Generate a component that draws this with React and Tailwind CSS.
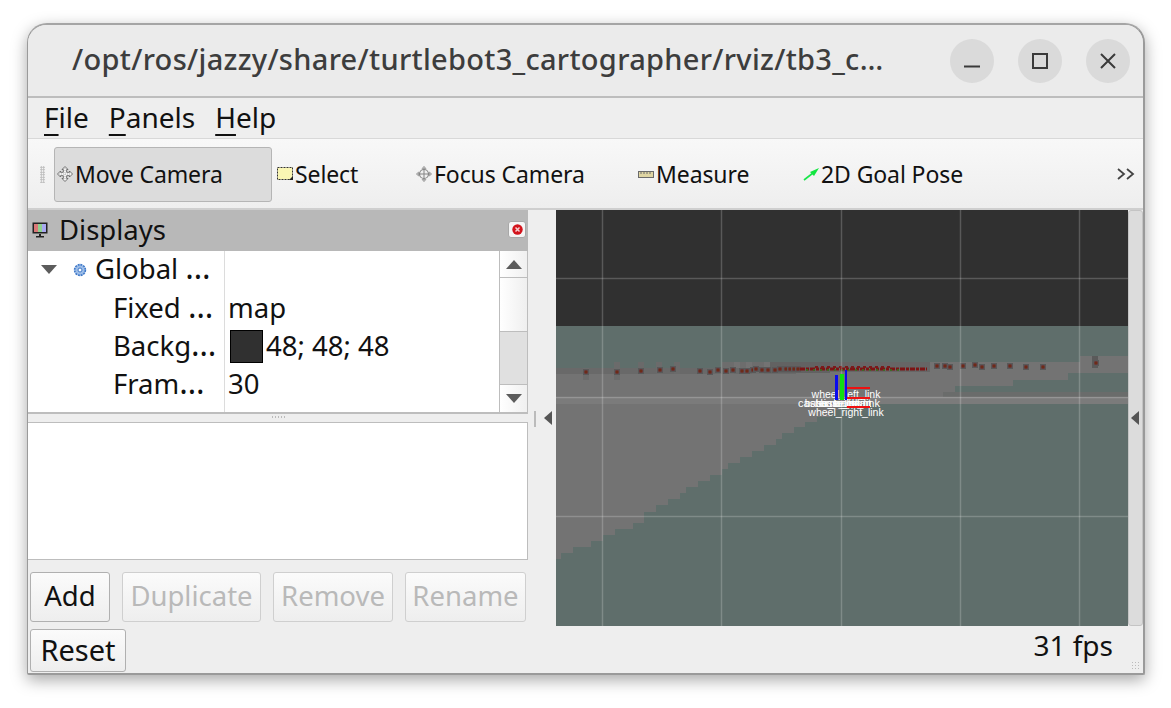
import React from "react";

const FONT = { fontFamily: '"Noto Sans", "Open Sans", sans-serif' };

const Move = () => (
  <svg width="16" height="16" viewBox="0 0 16 16" className="shrink-0">
    <path d="M8 .5 11 3.5H9.7V6.3H12.5V5L15.5 8 12.5 11V9.7H9.7V12.5H11L8 15.5 5 12.5H6.3V9.7H3.5V11L.5 8 3.5 5V6.3H6.3V3.5H5Z" fill="#f4f4f4" stroke="#6e6e6e" strokeWidth="1" />
    <path d="M2 8H14M8 2V14" stroke="#b5b5b5" strokeWidth="1" strokeDasharray="1 1" />
  </svg>
);
const SelectIcon = () => (
  <svg width="16" height="14" viewBox="0 0 16 14" className="shrink-0">
    <rect x=".5" y=".5" width="15" height="12" fill="#faf6b4" stroke="#333" strokeDasharray="2 1" />
    <path d="M12 13h4V9z" fill="#222" />
  </svg>
);
const Focus = () => (
  <svg width="16" height="16" viewBox="0 0 16 16" className="shrink-0">
    <path d="M8 .3 10 2.6H6ZM8 15.7 10 13.4H6ZM.3 8 2.6 6V10ZM15.7 8 13.4 6V10Z" fill="#bdbdbd" stroke="#8a8a8a" strokeWidth=".6" />
    <circle cx="8" cy="8" r="4.5" fill="#efefef" stroke="#858585" strokeWidth="1.2" />
    <path d="M8 2.5V13.5M2.5 8H13.5" stroke="#858585" strokeWidth="1" />
  </svg>
);
const Ruler = () => (
  <svg width="16" height="7" viewBox="0 0 16 7" className="shrink-0">
    <rect x=".5" y=".5" width="15" height="6" fill="#dfd5a3" stroke="#6a6a6a" />
    <path d="M3 1v2M6 1v2M9 1v2M12 1v2" stroke="#6a6a6a" />
  </svg>
);
const Goal = () => (
  <svg width="16" height="14" viewBox="0 0 16 14" className="shrink-0">
    <path d="M1 13 10 6" stroke="#19e64a" strokeWidth="1.6" />
    <path d="M16 1 7 5 11 9Z" fill="#12e640" />
  </svg>
);

const ToolItem = ({ icon, label, className = "" }) => (
  <div className={`flex items-center h-[55px] ${className}`}>
    {icon}
    <span className="text-[#111] ml-[2px]">{label}</span>
  </div>
);

const Mn = ({ u, rest }) => (
  <span className="mb-[2px]">
    <span className="underline underline-offset-[6px] decoration-[1.5px]">{u}</span>
    {rest}
  </span>
);

const Btn = ({ children, disabled, className = "" }) => (
  <div
    className={`flex items-center justify-center rounded-[3px] border pb-[2px] bg-gradient-to-b from-[#fbfbfb] to-[#eeeeee] ${
      disabled ? "text-[#b9b9b9] border-[#cfcfcf]" : "text-[#111] border-[#b0b0b0]"
    } ${className}`}
  >
    {children}
  </div>
);

const WinBtn = ({ children }) => (
  <div className="w-11 h-11 rounded-full bg-[#dadada] flex items-center justify-center">{children}</div>
);

const Dots = () => <span className="text-[32px] leading-[0]">…</span>;

const TreeRow = ({ label, dots, value, indent, swatch, arrow, gear }) => (
  <div className="flex h-[38.3px] items-center">
    <div className="w-[196px] shrink-0 h-full flex items-center relative" style={{ paddingLeft: indent }}>
      {arrow && (
        <svg width="16" height="9" viewBox="0 0 16 9" className="absolute left-[13px] top-[14px]">
          <path d="M0 0H16L8 9Z" fill="#5c5c5c" />
        </svg>
      )}
      {gear && (
        <svg width="14" height="14" viewBox="0 0 14 14" className="absolute left-[45px] top-[12px]">
          <circle cx="7" cy="7" r="5.4" fill="#9cbde8" stroke="#3f78c8" strokeWidth="1.6" strokeDasharray="2 0.8" />
          <circle cx="7" cy="7" r="2" fill="#fff" stroke="#3f78c8" />
        </svg>
      )}
      <span className="text-[#111] whitespace-pre mb-[2px]">{label}{dots && <Dots />}</span>
    </div>
    <div className="flex-1 h-full border-l border-[#dcdcdc] flex items-center pl-[3px] text-[#111] whitespace-nowrap">
      {swatch && <span className="w-[33px] h-[33px] bg-[#303030] border border-black mr-[3px] ml-[2px] shrink-0" />}
      {value && <span className="mb-[2px]">{value}</span>}
    </div>
  </div>
);

const dots = [
  [586,372],[617,372],[641,371],[660,370],[673,369],[700,371],[710,372],[718,370],[726,371],[733,370],[742,371],[747,371],[753,370],[756,369],[762,370],
  [768,370],[775,370],[780,369],[786,369],[790,369],[794,369],[798,369],
  [937,366],[945,366],[950,367],[963,366],[975,365],[982,367],[994,366],[1010,366],[1026,367],[1043,367],[1096,363],
];

const shade = [
  [583,368,6,12,"#6b6b6b"],[614,362,6,18,"#6b6b6b"],[638,362,6,12,"#6a6a6a"],[656,362,6,12,"#6b6b6b"],[674,362,6,12,"#6b6b6b"],
  [722,362,12,12,"#6d6d6d"],[740,362,6,12,"#6d6d6d"],[752,362,12,12,"#6d6d6d"],
  [770,362,60,11,"#626262"],[830,362,100,10,"#666666"],
  [1092,356,6,12,"#5a5a5a"],
];

const Viewport = () => (
  <svg width="572" height="416" viewBox="556 210 572 416" className="block shrink-0" style={{ fontFamily: '"Liberation Sans", sans-serif' }}>
    <rect x="556" y="210" width="572" height="416" fill="#303030" />
    <rect x="556" y="326" width="572" height="300" fill="#5f6e6b" />
    <path
      fill="#737373"
      d="M556 368H722V362H1080V356H1128V373H1068V380H1013V386H955V392H943V397H1128V404H840V410H830V417H817V422H805V427H794V433H782V439H776V445H764V451H752V457H740V463H728V469H722V475H710V481H698V487H686V493H680V499H668V505H656V512H644V523H633V529H615V535H603V541H591V547H573V553H561V559H556Z"
    />
    <rect x="556" y="368" width="240" height="6" fill="#696969" />
    <rect x="943" y="392" width="185" height="5" fill="#6a6c6b" />
    <rect x="556" y="397" width="572" height="7" fill="#7b7b7b" />
    {shade.map(([x, y, w, h, c], i) => (
      <rect key={i} x={x} y={y} width={w} height={h} fill={c} />
    ))}
    {dots.map(([x, y], i) => (
      <g key={i}>
        <rect x={x - 3} y={y - 3} width="6" height="6" fill="#595959" />
        <rect x={x - 1.5} y={y - 1.5} width="3" height="3" fill="#7d1414" />
        <rect x={x - 0.5} y={y - 0.5} width="1" height="1" fill="#3a7a1c" />
      </g>
    ))}
    <path d="M800 369H927" stroke="#7d1414" strokeWidth="3" strokeDasharray="5 1 3 1" />
    <path d="M806 370H900" stroke="#2f7a1e" strokeWidth="1.4" strokeDasharray="2 5" />
    <path d="M815 367H890" stroke="#7a1a1a" strokeWidth="2" strokeDasharray="3 3" />
    <g stroke="#ffffff" strokeOpacity="0.2" strokeWidth="1.5">
      {[602.5, 721.5, 841.5, 960.5, 1079.5].map((x) => (
        <line key={x} x1={x} x2={x} y1="210" y2="626" />
      ))}
      {[278.5, 397.5, 516.5].map((y) => (
        <line key={y} x1="556" x2="1128" y1={y} y2={y} />
      ))}
    </g>
    <g fill="#ffffff" fontSize="10.5" textAnchor="middle">
      <text x="846" y="397.5">wheel_left_link</text>
      <text x="839" y="407" fontSize="11">caster_back_link</text>
      <text x="838" y="407">base_footprint</text>
      <text x="838" y="407">base_link</text>
      <text x="843" y="407">imu_link</text>
      <text x="846" y="407">base_scan</text>
      <text x="846" y="416">wheel_right_link</text>
    </g>
    <rect x="835" y="375" width="3" height="25" fill="#0a0aee" />
    <rect x="840" y="374" width="4" height="26" fill="#11dd11" />
    <rect x="845" y="370" width="2" height="30" fill="#0a0aee" />
    <rect x="847" y="387" width="23" height="2" fill="#ee1111" />
    <rect x="847" y="397" width="23" height="2" fill="#ee1111" />
    <rect x="847" y="406" width="23" height="2" fill="#ee1111" />
  </svg>
);

export default function App() {
  return (
    <div className="w-[1171px] h-[708px] bg-white overflow-hidden pt-[23px] pl-[27px]" style={FONT}>
      <div className="w-[1118px] h-[652px] flex flex-col bg-[#eeeeee] border-2 border-l-[1px] border-[#9a9a9a] border-t-[#a5a5a5] rounded-t-[20px] rounded-b-[2px] overflow-hidden text-[27.5px] leading-none shadow-[0_5px_16px_rgba(0,0,0,0.35)]">
        {/* Title bar */}
        <div className="h-[73px] shrink-0 bg-[#ebebeb] border-b-2 border-[#bdbdbd] flex items-center pl-[44px] pr-[13px]">
          <div className="flex-1 mb-[4px] text-[29px] tracking-[0.3px] font-medium text-[#3d3d3d] whitespace-nowrap">/opt/ros/jazzy/share/turtlebot3_cartographer/rviz/tb3_c…</div>
          <div className="flex gap-6">
            <WinBtn>
              <svg width="18" height="18" viewBox="0 0 18 18"><path d="M1 14.5H17" stroke="#3a3a3a" strokeWidth="2" /></svg>
            </WinBtn>
            <WinBtn>
              <svg width="18" height="18" viewBox="0 0 18 18"><rect x="2" y="2" width="14" height="14" fill="none" stroke="#3a3a3a" strokeWidth="2" /></svg>
            </WinBtn>
            <WinBtn>
              <svg width="18" height="18" viewBox="0 0 18 18"><path d="M2 2 16 16M16 2 2 16" stroke="#3a3a3a" strokeWidth="2" /></svg>
            </WinBtn>
          </div>
        </div>
        {/* Menu */}
        <div className="h-[41px] shrink-0 flex items-center pl-[16px] gap-[20px] border-b border-[#d8d8d8] text-[#111] text-[28px]">
          <Mn u="F" rest="ile" />
          <Mn u="P" rest="anels" />
          <Mn u="H" rest="elp" />
        </div>
        {/* Toolbar */}
        <div className="h-[71px] shrink-0 relative flex items-center bg-gradient-to-b from-[#f8f8f8] to-[#eeeeee] border-b-2 border-[#cfcfcf] pl-[26px] pt-[1px] text-[23px] tracking-[-0.1px]">
          <div className="w-[218px] h-[55px] shrink-0 bg-[#dcdcdc] border border-[#b5b5b5] rounded-[3px] flex items-center pl-[2px] mr-[5px]">
            <Move />
            <span className="text-[#111] ml-[2px]">Move Camera</span>
          </div>
          <ToolItem icon={<SelectIcon />} label="Select" className="w-[139px]" />
          <ToolItem icon={<Focus />} label="Focus Camera" className="w-[222px]" />
          <ToolItem icon={<Ruler />} label="Measure" className="w-[165px]" />
          <ToolItem icon={<Goal />} label="2D Goal Pose" />
          <span className="ml-auto mr-[8px]">
            <svg width="18" height="14" viewBox="0 0 18 14"><path d="M1 2 7 7 1 12M10 2 16 7 10 12" fill="none" stroke="#444" strokeWidth="1.8" /></svg>
          </span>
          <div className="absolute left-[12px] top-[27px] w-[5px] h-[17px] bg-[radial-gradient(#bbb_1px,transparent_1px)] bg-[length:2.5px_2.5px]" />
        </div>
        {/* Body */}
        <div className="flex-1 flex min-h-0">
          {/* Left dock */}
          <div className="w-[500px] shrink-0 flex flex-col">
            <div className="h-[41px] shrink-0 bg-[#b8b8b8] flex items-center pl-[4px] relative">
              <svg width="16" height="17" viewBox="0 0 16 17" className="mr-[11px] shrink-0">
                <rect x=".5" y=".5" width="15" height="11" fill="#222" />
                <rect x="2" y="2" width="4" height="8" fill="#d97878" />
                <rect x="6" y="2" width="4" height="8" fill="#8fd08f" />
                <rect x="10" y="2" width="4" height="8" fill="#a8a8f0" />
                <path d="M7 12h2v2h3v1.5H4V14h3z" fill="#222" />
              </svg>
              <span className="text-[#111] mb-[2px]">Displays</span>
              <div className="absolute right-[2px] top-[11px] w-[18px] h-[17px] bg-[#f5f5f5] border border-[#a8a8a8] rounded-[3px] flex items-center justify-center">
                <svg width="11" height="11" viewBox="0 0 11 11">
                  <circle cx="5.5" cy="5.5" r="5.2" fill="#d3141c" />
                  <path d="M3.5 3.5 7.5 7.5M7.5 3.5 3.5 7.5" stroke="#f6d0d0" strokeWidth="1.5" />
                </svg>
              </div>
            </div>
            <div className="h-[163px] shrink-0 flex bg-white border-b-2 border-r border-[#bdbdbd] overflow-hidden">
              <div className="flex-1 overflow-hidden min-w-0">
                <TreeRow label="Global " dots indent={67} arrow gear />
                <TreeRow label="Fixed " dots value="map" indent={85} />
                <TreeRow label="Backg" dots value="48; 48; 48" indent={85} swatch />
                <TreeRow label="Fram" dots value="30" indent={85} />
                <TreeRow label="Global" indent={67} />
              </div>
              <div className="w-[28px] shrink-0 flex flex-col border-l border-[#bdbdbd]">
                <div className="h-[27px] shrink-0 flex items-center justify-center border-b border-[#bdbdbd] bg-gradient-to-r from-white to-[#f0f0f0]">
                  <svg width="16" height="9" viewBox="0 0 16 9"><path d="M0 9H16L8 0Z" fill="#5c5c5c" /></svg>
                </div>
                <div className="h-[53px] shrink-0 bg-gradient-to-r from-white to-[#efefef]" />
                <div className="h-[54px] shrink-0 bg-[#e0e0e0] border-y border-[#bdbdbd]" />
                <div className="flex-1 flex items-center justify-center bg-gradient-to-r from-white to-[#f0f0f0]">
                  <svg width="16" height="9" viewBox="0 0 16 9"><path d="M0 0H16L8 9Z" fill="#5c5c5c" /></svg>
                </div>
              </div>
            </div>
            <div className="h-[8px] shrink-0 flex justify-center items-start">
              <div className="mt-[2px] ml-[2px] w-[16px] h-[2px] bg-[radial-gradient(#bbb_1px,transparent_1px)] bg-[length:3px_2px]" />
            </div>
            <div className="h-[138px] shrink-0 bg-white border border-[#bdbdbd] border-l-0" />
            <div className="flex mt-[12px] pl-[2px] gap-[12px]">
              <Btn className="w-[80px] h-[50px]">Add</Btn>
              <Btn disabled className="w-[139px] h-[50px]">Duplicate</Btn>
              <Btn disabled className="w-[120px] h-[50px]">Remove</Btn>
              <Btn disabled className="w-[121px] h-[50px]">Rename</Btn>
            </div>
            <div className="flex mt-[7px] pl-[2px]">
              <Btn className="w-[96px] h-[43px] text-[29px]">Reset</Btn>
            </div>
          </div>
          {/* Splitter */}
          <div className="w-[28px] shrink-0 relative">
            <svg width="8" height="14" viewBox="0 0 8 14" className="absolute left-[16px] top-[201px]"><path d="M8 0V14L0 7Z" fill="#555" /></svg>
            <div className="absolute left-[6px] top-[201px] w-[2px] h-[16px] bg-[radial-gradient(#bbb_1px,transparent_1px)] bg-[length:2px_3px]" />
          </div>
          {/* Viewport */}
          <div className="flex-1 flex flex-col min-w-0">
            <div className="flex h-[416px] shrink-0">
              <Viewport />
              <div className="flex-1 bg-[#dcdcdc] border border-[#c4c4c4] rounded-[3px] relative">
                <svg width="8" height="14" viewBox="0 0 8 14" className="absolute left-[2px] top-[200px]"><path d="M8 0V14L0 7Z" fill="#555" /></svg>
              </div>
            </div>
            <div className="flex-1 relative">
              <span className="absolute right-[30px] top-[5px] text-[#111] text-[28px]">31 fps</span>
              <div className="absolute right-[2px] bottom-[2px] w-[10px] h-[10px] bg-[radial-gradient(#bbb_1px,transparent_1px)] bg-[length:3px_3px]" />
            </div>
          </div>
        </div>
      </div>
    </div>
  );
}
